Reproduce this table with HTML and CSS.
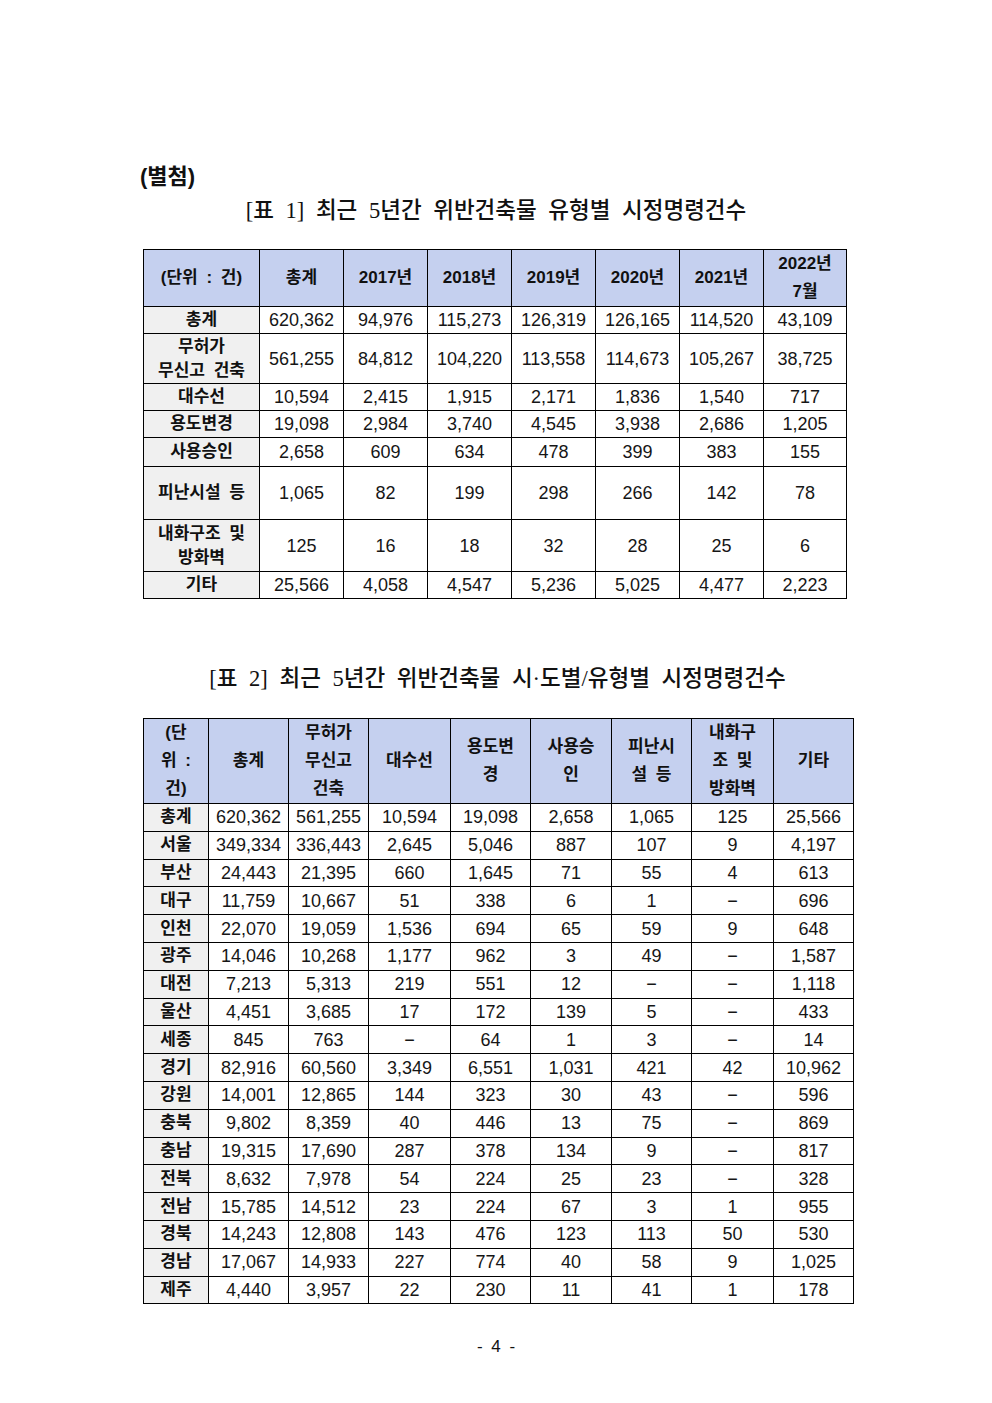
FILE: index.html
```html
<!DOCTYPE html>
<html lang="ko">
<head>
<meta charset="utf-8">
<title>별첨</title>
<link rel="stylesheet" href="styles.css">
</head>
<body>
<div class="page">
  <div class="attach">(별첨)</div>
  <h1 class="title">[표 1] 최근 5년간 위반건축물 유형별 시정명령건수</h1>
  <table class="tbl t1">
    <colgroup>
      <col style="width:116px"><col style="width:84px"><col style="width:84px"><col style="width:84px"><col style="width:84px"><col style="width:84px"><col style="width:84px"><col style="width:83px">
    </colgroup>
    <tr class="hd" style="height:57px">
      <th>(단위 : 건)</th><th>총계</th><th>2017년</th><th>2018년</th><th>2019년</th><th>2020년</th><th>2021년</th><th>2022년<br>7월</th>
    </tr>
    <tr style="height:27px"><th class="lbl">총계</th><td>620,362</td><td>94,976</td><td>115,273</td><td>126,319</td><td>126,165</td><td>114,520</td><td>43,109</td></tr>
    <tr style="height:50px"><th class="lbl">무허가<br>무신고 건축</th><td>561,255</td><td>84,812</td><td>104,220</td><td>113,558</td><td>114,673</td><td>105,267</td><td>38,725</td></tr>
    <tr style="height:27px"><th class="lbl">대수선</th><td>10,594</td><td>2,415</td><td>1,915</td><td>2,171</td><td>1,836</td><td>1,540</td><td>717</td></tr>
    <tr style="height:27px"><th class="lbl">용도변경</th><td>19,098</td><td>2,984</td><td>3,740</td><td>4,545</td><td>3,938</td><td>2,686</td><td>1,205</td></tr>
    <tr style="height:29px"><th class="lbl">사용승인</th><td>2,658</td><td>609</td><td>634</td><td>478</td><td>399</td><td>383</td><td>155</td></tr>
    <tr style="height:53px"><th class="lbl">피난시설 등</th><td>1,065</td><td>82</td><td>199</td><td>298</td><td>266</td><td>142</td><td>78</td></tr>
    <tr style="height:52px"><th class="lbl">내화구조 및<br>방화벽</th><td>125</td><td>16</td><td>18</td><td>32</td><td>28</td><td>25</td><td>6</td></tr>
    <tr style="height:27px"><th class="lbl">기타</th><td>25,566</td><td>4,058</td><td>4,547</td><td>5,236</td><td>5,025</td><td>4,477</td><td>2,223</td></tr>
  </table>

  <h1 class="title title2">[표 2] 최근 5년간 위반건축물 시·도별/유형별 시정명령건수</h1>
  <table class="tbl t2">
    <colgroup>
      <col style="width:65px"><col style="width:80px"><col style="width:80px"><col style="width:82px"><col style="width:80px"><col style="width:81px"><col style="width:80px"><col style="width:82px"><col style="width:80px">
    </colgroup>
    <tr class="hd hd3" style="height:85px">
      <th>(단<br>위 :<br>건)</th><th>총계</th><th>무허가<br>무신고<br>건축</th><th>대수선</th><th>용도변<br>경</th><th>사용승<br>인</th><th>피난시<br>설 등</th><th>내화구<br>조 및<br>방화벽</th><th>기타</th>
    </tr>
    <tr><th class="lbl">총계</th><td>620,362</td><td>561,255</td><td>10,594</td><td>19,098</td><td>2,658</td><td>1,065</td><td>125</td><td>25,566</td></tr>
    <tr><th class="lbl">서울</th><td>349,334</td><td>336,443</td><td>2,645</td><td>5,046</td><td>887</td><td>107</td><td>9</td><td>4,197</td></tr>
    <tr><th class="lbl">부산</th><td>24,443</td><td>21,395</td><td>660</td><td>1,645</td><td>71</td><td>55</td><td>4</td><td>613</td></tr>
    <tr><th class="lbl">대구</th><td>11,759</td><td>10,667</td><td>51</td><td>338</td><td>6</td><td>1</td><td>−</td><td>696</td></tr>
    <tr><th class="lbl">인천</th><td>22,070</td><td>19,059</td><td>1,536</td><td>694</td><td>65</td><td>59</td><td>9</td><td>648</td></tr>
    <tr><th class="lbl">광주</th><td>14,046</td><td>10,268</td><td>1,177</td><td>962</td><td>3</td><td>49</td><td>−</td><td>1,587</td></tr>
    <tr><th class="lbl">대전</th><td>7,213</td><td>5,313</td><td>219</td><td>551</td><td>12</td><td>−</td><td>−</td><td>1,118</td></tr>
    <tr><th class="lbl">울산</th><td>4,451</td><td>3,685</td><td>17</td><td>172</td><td>139</td><td>5</td><td>−</td><td>433</td></tr>
    <tr><th class="lbl">세종</th><td>845</td><td>763</td><td>−</td><td>64</td><td>1</td><td>3</td><td>−</td><td>14</td></tr>
    <tr><th class="lbl">경기</th><td>82,916</td><td>60,560</td><td>3,349</td><td>6,551</td><td>1,031</td><td>421</td><td>42</td><td>10,962</td></tr>
    <tr><th class="lbl">강원</th><td>14,001</td><td>12,865</td><td>144</td><td>323</td><td>30</td><td>43</td><td>−</td><td>596</td></tr>
    <tr><th class="lbl">충북</th><td>9,802</td><td>8,359</td><td>40</td><td>446</td><td>13</td><td>75</td><td>−</td><td>869</td></tr>
    <tr><th class="lbl">충남</th><td>19,315</td><td>17,690</td><td>287</td><td>378</td><td>134</td><td>9</td><td>−</td><td>817</td></tr>
    <tr><th class="lbl">전북</th><td>8,632</td><td>7,978</td><td>54</td><td>224</td><td>25</td><td>23</td><td>−</td><td>328</td></tr>
    <tr><th class="lbl">전남</th><td>15,785</td><td>14,512</td><td>23</td><td>224</td><td>67</td><td>3</td><td>1</td><td>955</td></tr>
    <tr><th class="lbl">경북</th><td>14,243</td><td>12,808</td><td>143</td><td>476</td><td>123</td><td>113</td><td>50</td><td>530</td></tr>
    <tr><th class="lbl">경남</th><td>17,067</td><td>14,933</td><td>227</td><td>774</td><td>40</td><td>58</td><td>9</td><td>1,025</td></tr>
    <tr><th class="lbl">제주</th><td>4,440</td><td>3,957</td><td>22</td><td>230</td><td>11</td><td>41</td><td>1</td><td>178</td></tr>
  </table>

  <div class="pageno">- 4 -</div>
</div>
</body>
</html>
```

FILE: styles.css
```css
* { box-sizing: border-box; }
html, body {
  margin: 0;
  padding: 0;
  background: #ffffff;
}
body {
  font-family: "Liberation Sans", "Noto Sans CJK KR", sans-serif;
  color: #111111;
}
.page {
  width: 992px;
  min-height: 1403px;
  padding: 162px 0 0 143px;
}
.attach {
  margin-left: -3px;
  font-size: 22px;
  font-weight: 700;
  line-height: 30px;
  height: 30px;
}
.title {
  margin: 4px 0 0 0;
  width: 706px;
  text-align: center;
  font-family: "Liberation Serif", "Noto Sans CJK KR", serif;
  font-size: 22.5px;
  font-weight: 500;
  line-height: 30px;
  word-spacing: 6px;
}
.title2 {
  margin-top: 65px;
  width: 709px;
}
.tbl {
  border-collapse: collapse;
  table-layout: fixed;
  margin-top: 23px;
}
.t1 { width: 703px; }
.t2 { width: 710px; margin-top: 24px; }
.tbl th, .tbl td {
  border: 1px solid #000000;
  padding: 0;
  text-align: center;
  vertical-align: middle;
}
.tbl td {
  font-size: 18px;
  line-height: 24px;
  font-weight: 400;
  color: #161616;
}
.tbl th {
  font-size: 17px;
  line-height: 24px;
  font-weight: 700;
  word-spacing: 4px;
}
.tbl .hd th {
  background: #c5d0ef;
  line-height: 28px;
  font-size: 17px;
}
.tbl .lbl {
  background: #f0f0f0;
}
.t2 tr { height: 27.8px; }
.pageno {
  margin-top: 28px;
  width: 706px;
  text-align: center;
  font-size: 17px;
  line-height: 30px;
  word-spacing: 4px;
}
```
